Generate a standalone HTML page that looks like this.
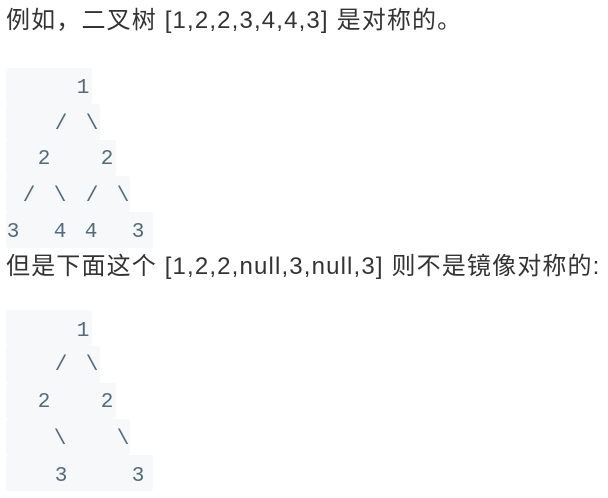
<!DOCTYPE html>
<html><head><meta charset="utf-8"><style>
body{margin:0;width:608px;height:498px;background:#fff;position:relative;overflow:hidden;font-family:"Liberation Sans","Noto Sans CJK SC",sans-serif}
.t{position:absolute;left:6px;font-size:24px;color:#333;white-space:nowrap;line-height:28px;letter-spacing:1.15px}
.bg{position:absolute;left:6px;background:#f6f8fa;border-radius:3px}
.c{position:absolute;font-family:"Liberation Mono","DejaVu Sans Mono",monospace;font-size:21px;color:#546a7b;width:20px;margin-left:-10px;text-align:center;line-height:20px;margin-top:-10px}
</style></head><body>
<div class="t" style="top:7px">例如，二叉树 [1,2,2,3,4,4,3] 是对称的。</div>
<div class="bg" style="top:68px;height:36px;width:86px"></div>
<div class="bg" style="top:104px;height:36px;width:94px"></div>
<div class="bg" style="top:140px;height:36px;width:110px"></div>
<div class="bg" style="top:176px;height:36px;width:124px"></div>
<div class="bg" style="top:212px;height:36px;width:147px"></div>
<span class="c" style="left:83px;top:89px">1</span>
<span class="c" style="left:61px;top:125px">/</span><span class="c" style="left:92px;top:125px">\</span>
<span class="c" style="left:44px;top:160px">2</span><span class="c" style="left:107px;top:160px">2</span>
<span class="c" style="left:29px;top:197px">/</span><span class="c" style="left:60px;top:197px">\</span><span class="c" style="left:92px;top:197px">/</span><span class="c" style="left:123px;top:197px">\</span>
<span class="c" style="left:13px;top:233px">3</span><span class="c" style="left:60px;top:233px">4</span><span class="c" style="left:91px;top:233px">4</span><span class="c" style="left:138px;top:233px">3</span>
<div class="t" style="top:253px">但是下面这个 [1,2,2,null,3,null,3] 则不是镜像对称的:</div>
<div class="bg" style="top:310px;height:36px;width:86px"></div>
<div class="bg" style="top:346px;height:37px;width:94px"></div>
<div class="bg" style="top:383px;height:36px;width:110px"></div>
<div class="bg" style="top:419px;height:36px;width:124px"></div>
<div class="bg" style="top:455px;height:36px;width:147px"></div>
<span class="c" style="left:83px;top:332px">1</span>
<span class="c" style="left:61px;top:366px">/</span><span class="c" style="left:92px;top:366px">\</span>
<span class="c" style="left:44px;top:403px">2</span><span class="c" style="left:107px;top:403px">2</span>
<span class="c" style="left:60px;top:440px">\</span><span class="c" style="left:123px;top:440px">\</span>
<span class="c" style="left:61px;top:477px">3</span><span class="c" style="left:138px;top:477px">3</span>
</body></html>
